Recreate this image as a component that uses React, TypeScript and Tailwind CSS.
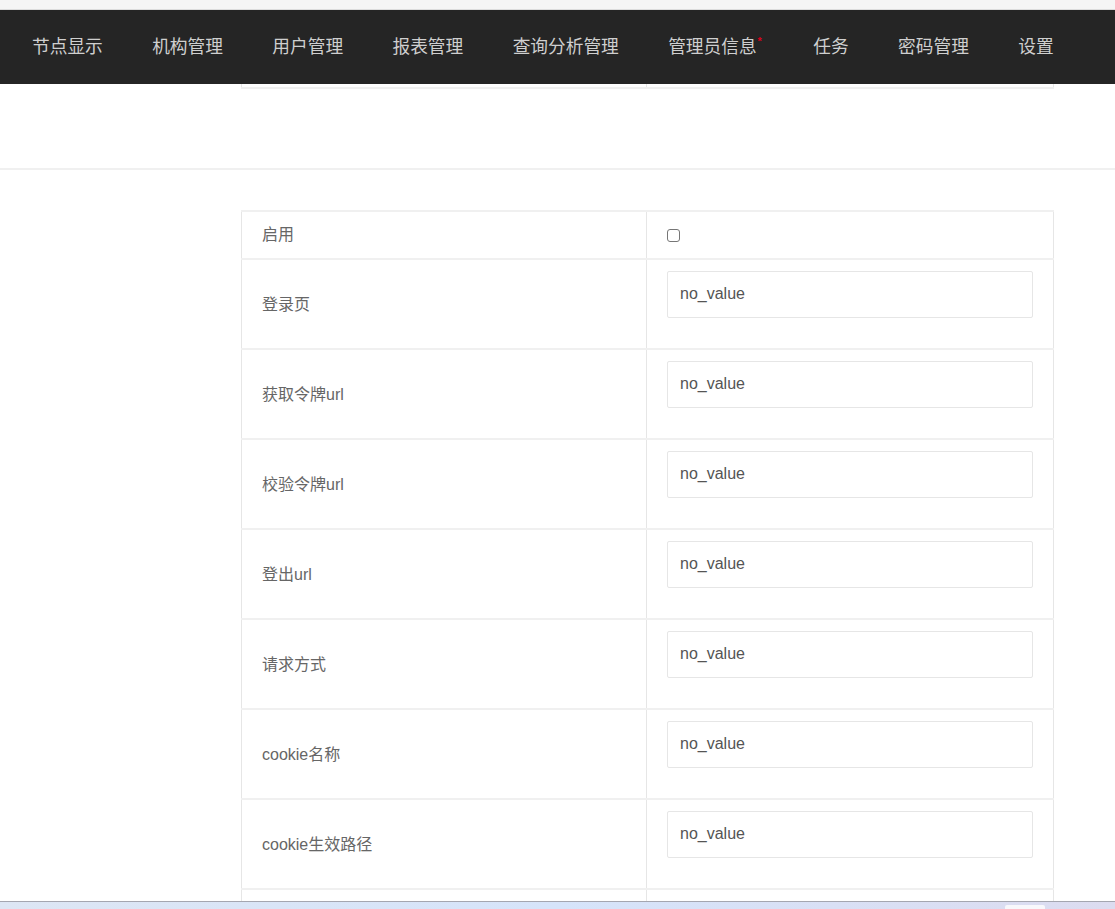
import React from "react";

const NAV_ITEMS: { label: string; dot?: boolean }[] = [
  { label: "节点显示" },
  { label: "机构管理" },
  { label: "用户管理" },
  { label: "报表管理" },
  { label: "查询分析管理" },
  { label: "管理员信息", dot: true },
  { label: "任务" },
  { label: "密码管理" },
  { label: "设置" },
];

const FIELDS = [
  "登录页",
  "获取令牌url",
  "校验令牌url",
  "登出url",
  "请求方式",
  "cookie名称",
  "cookie生效路径",
  "",
];

const font = {
  fontFamily: '"Liberation Sans", "Noto Sans CJK SC", Arial, sans-serif',
};

export default function App() {
  return (
    <div className="relative h-[909px] overflow-hidden bg-white" style={font}>
      {/* top strip */}
      <div className="h-[10px] border-b border-[#dcdcdc] bg-[#f5f5f5]" />

      {/* Navbar */}
      <nav className="flex h-[74px] items-center gap-[49.4px] bg-[#252525] pl-[32px] text-[17.7px] text-[#cfcfcf]">
        {NAV_ITEMS.map((item) => (
          <span key={item.label} className="flex items-start whitespace-nowrap">
            {item.label}
            {item.dot && (
              <span className="ml-[1px] mr-[2px] mt-[-3px] text-[11px] font-bold leading-[20px] text-[#d9001b]">
                *
              </span>
            )}
          </span>
        ))}
      </nav>

      {/* previous table, scrolled under the navbar */}
      <div className="ml-[241px] flex h-[5px] w-[813px] border-b-2 border-[#f0f0f0]">
        <div className="w-[406px] border-l border-r border-[#e6e6e6]" />
        <div className="flex-1 border-r border-[#e6e6e6]" />
      </div>

      <div className="mt-[79px] h-[2px] bg-[#f0f0f0]" />

      {/* Settings table */}
      <div className="ml-[241px] mt-[40px] w-[813px] border-t-2 border-[#f0f0f0] text-[16px] text-[#666]">
        <div className="flex h-[48px] border-b-2 border-[#f0f0f0]">
          <div className="flex w-[406px] items-center border-l border-r border-[#e6e6e6] pl-[20px]">
            启用
          </div>
          <div className="flex flex-1 items-center border-r border-[#e6e6e6] pl-[20px]">
            <input
              type="checkbox"
              className="h-[13px] w-[13px] appearance-none rounded-[3px] border border-[#767676] bg-white"
            />
          </div>
        </div>
        {FIELDS.map((label, i) => (
          <div key={i} className="flex h-[90px] border-b-2 border-[#f0f0f0]">
            <div className="flex w-[406px] items-center border-l border-r border-[#e6e6e6] pl-[20px] pt-[1px]">
              {label}
            </div>
            <div className="flex-1 border-r border-[#e6e6e6] px-[20px] pt-[11px]">
              <div className="flex h-[47px] items-center rounded-[2px] border border-[#e6e6e6] bg-white pl-[12px] pb-[2px] text-[#555]">
                {label ? "no_value" : ""}
              </div>
            </div>
          </div>
        ))}
      </div>

      {/* OS taskbar edge */}
      <div className="absolute bottom-0 left-0 right-0 h-[8px] border-t border-[#a4a6b0] bg-gradient-to-r from-[#dde6f4] via-[#d6e4fa] to-[#dcdcf0]">
        <div className="absolute right-[70px] top-[3px] h-[5px] w-[40px] rounded-t-[2px] bg-white/80" />
      </div>
    </div>
  );
}
